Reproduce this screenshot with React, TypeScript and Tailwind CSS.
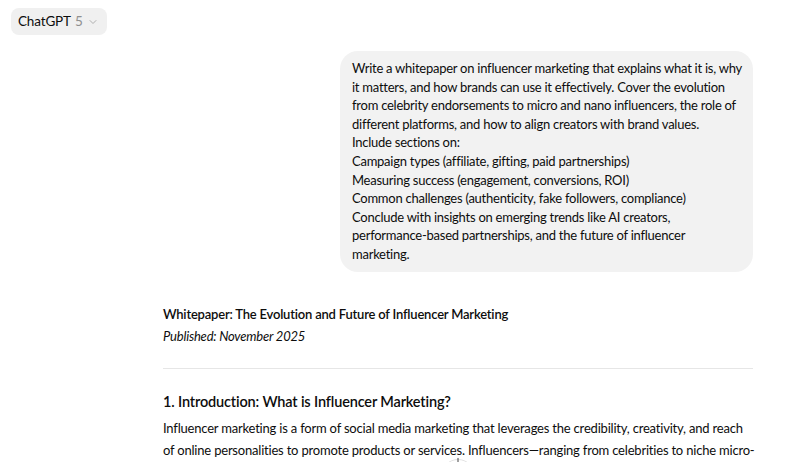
import { ChevronDown, ArrowDown } from "lucide-react";

const prompt = [
  "Write a whitepaper on influencer marketing that explains what it is, why",
  "it matters, and how brands can use it effectively. Cover the evolution",
  "from celebrity endorsements to micro and nano influencers, the role of",
  "different platforms, and how to align creators with brand values.",
  "Include sections on:",
  "Campaign types (affiliate, gifting, paid partnerships)",
  "Measuring success (engagement, conversions, ROI)",
  "Common challenges (authenticity, fake followers, compliance)",
  "Conclude with insights on emerging trends like AI creators,",
  "performance-based partnerships, and the future of influencer",
  "marketing.",
];

export default function App() {
  return (
    <div className="relative h-[462px] w-[793px] overflow-hidden bg-white text-[#0d0d0d] font-['Lato',sans-serif]">
      {/* Model switcher */}
      <header className="pl-[11px] pt-2">
        <button className="inline-flex h-[27px] items-center gap-[4px] rounded-lg bg-[#f0f0f0] pl-[7px] pr-[8px] text-[13.5px] tracking-[-0.15px]">
          <span>ChatGPT</span>
          <span className="text-[#8f8f8f]">5</span>
          <ChevronDown className="h-3 w-3 text-[#9a9a9a]" strokeWidth={1.5} />
        </button>
      </header>

      <main className="ml-[163px] w-[590px]">
        {/* User message */}
        <div className="mt-4 flex justify-end">
          <div className="w-[413px] whitespace-nowrap rounded-[18px] bg-[#f2f2f2] px-3 py-2 text-[13px] leading-[18.6px] tracking-[-0.25px]">
            {prompt.map((line) => (
              <div key={line}>{line}</div>
            ))}
          </div>
        </div>

        {/* Assistant answer */}
        <div className="mt-[31px] whitespace-nowrap text-[13px] tracking-[-0.2px]">
          <p className="font-semibold leading-[22px]">
            Whitepaper: The Evolution and Future of Influencer Marketing
          </p>
          <p className="italic leading-[22px]">Published: November 2025</p>
          <hr className="mt-[21px] border-[#e6e6e6]" />
          <h2 className="mt-[22px] text-[14.5px] font-semibold leading-[22px] tracking-[-0.15px]">
            1. Introduction: What is Influencer Marketing?
          </h2>
          <p className="mt-[4px] leading-[22px]">
            Influencer marketing is a form of social media marketing that leverages the credibility, creativity, and reach
            <br />
            of online personalities to promote products or services. Influencers—ranging from celebrities to niche micro-
          </p>
        </div>
      </main>

      {/* Scroll-to-bottom button */}
      <div className="absolute left-[441px] top-[459px] flex h-[34px] w-[34px] items-start justify-center rounded-full border border-[#e3e3e3] bg-white/70">
        <ArrowDown className="-mt-[5px] h-4 w-4 text-[#444]" strokeWidth={1.5} />
      </div>
    </div>
  );
}
